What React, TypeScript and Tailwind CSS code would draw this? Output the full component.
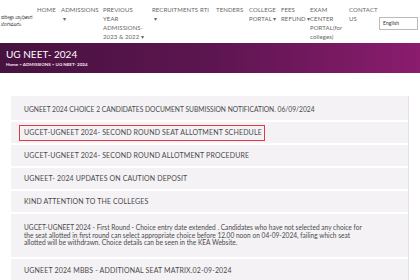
import React from "react";

const navItems: { w: string; lines: string[]; arrow?: boolean }[] = [
  { w: "w-[24px]", lines: ["HOME"] },
  { w: "w-[42px]", lines: ["ADMISSIONS"], arrow: true },
  { w: "w-[49px]", lines: ["PREVIOUS", "YEAR", "ADMISSIONS-", "2023 & 2022"], arrow: true },
  { w: "w-[48px]", lines: ["RECRUITMENTS"], arrow: true },
  { w: "w-[16px]", lines: ["RTI"] },
  { w: "w-[33px]", lines: ["TENDERS"] },
  { w: "w-[32px]", lines: ["COLLEGE", "PORTAL"], arrow: true },
  { w: "w-[29px]", lines: ["FEES", "REFUND"], arrow: true },
  { w: "w-[39px]", lines: ["EXAM", "CENTER", "PORTAL(for", "colleges)"] },
  { w: "w-[30px]", lines: ["CONTACT", "US"] },
];

const rows = [
  "UGNEET 2024 CHOICE 2 CANDIDATES DOCUMENT SUBMISSION NOTIFICATION. 06/09/2024",
  "UGCET-UGNEET 2024- SECOND ROUND SEAT ALLOTMENT SCHEDULE",
  "UGCET-UGNEET 2024- SECOND ROUND ALLOTMENT PROCEDURE",
  "UGNEET- 2024 UPDATES ON CAUTION DEPOSIT",
  "KIND ATTENTION TO THE COLLEGES",
];

export default function App() {
  const font = { fontFamily: "Lato, 'Open Sans', 'Liberation Sans', sans-serif" };
  return (
    <div className="w-[420px] h-[280px] overflow-hidden bg-white" style={font}>
      {/* Header */}
      <div className="h-[43px] flex items-start">
        <div
          className="w-[37px] h-full flex flex-col justify-center pl-[1px] text-[4.5px] leading-[7px] text-[#333] whitespace-nowrap"
          style={{ fontFamily: "'Noto Sans Kannada', 'Noto Sans', sans-serif" }}
        >
          <span>ಪರೀಕ್ಷಾ ಪ್ರಾಧಿಕಾರ</span>
          <span>ಬೆಂಗಳೂರು</span>
        </div>
        <div className="flex items-start pt-[5px] text-[6px] leading-[9px] text-[#666] tracking-[0.1px]">
          {navItems.map((n, i) => (
            <div key={i} className={`${n.w} shrink-0`}>
              {n.lines.map((l, j) => (
                <div key={j} className="whitespace-nowrap">
                  {l}
                  {n.arrow && j === n.lines.length - 1 && n.lines.length > 1 ? " ▾" : ""}
                </div>
              ))}
              {n.arrow && n.lines.length === 1 ? <div className="pl-[2px]">▾</div> : null}
            </div>
          ))}
          <div className="w-[39px] h-[13px] mt-[12px] border border-[#bbb] text-[5px] leading-[11px] pl-[3px] text-[#333]">
            English
          </div>
        </div>
      </div>

      {/* Banner */}
      <div className="h-[30px] bg-gradient-to-r from-[#47123f] via-[#5c1550] to-[#8b1c6e] px-[6px] pt-[4px] text-white">
        <div className="text-[10px] leading-[14px]">UG NEET- 2024</div>
        <div className="text-[4.5px] leading-[8px] font-bold text-[#f3e6f0]">
          Home &gt; ADMISSIONS &gt; UG NEET- 2024
        </div>
      </div>

      {/* Content */}
      <div className="pt-[23px] px-[11px]">
        <div className="bg-[#f4f2f5] border-r border-[#e4e2e6] pt-[3px] text-[#4a4a4a]">
          {rows.map((r, i) => (
            <div
              key={i}
              className={`h-[23px] border-b-2 border-white flex items-center px-[13px] ${
                i === 0 ? "text-[6.7px]" : "text-[7px] tracking-[0.15px]"
              }`}
            >
              {i === 1 ? (
                <span className="border-[1.5px] border-[#dc3a44] ml-[-5px] pl-[4px] pr-[2px] h-[16px] flex items-center">{r}</span>
              ) : (
                r
              )}
            </div>
          ))}
          <div className="h-[45px] border-b-2 border-white flex items-center px-[13px] text-[6.6px] leading-[7.5px]">
            <div>
              UGCET-UGNEET 2024 - First Round - Choice entry date extended . Candidates who have not selected any choice for
              <br />
              the seat allotted in first round can select appropriate choice before 12.00 noon on 04-09-2024, failing which seat
              <br />
              allotted will be withdrawn. Choice details can be seen in the KEA Website.
            </div>
          </div>
          <div className="h-[23px] flex items-center px-[13px] text-[7px] tracking-[0.15px]">
            UGNEET 2024 MBBS - ADDITIONAL SEAT MATRIX.02-09-2024
          </div>
        </div>
      </div>
    </div>
  );
}
